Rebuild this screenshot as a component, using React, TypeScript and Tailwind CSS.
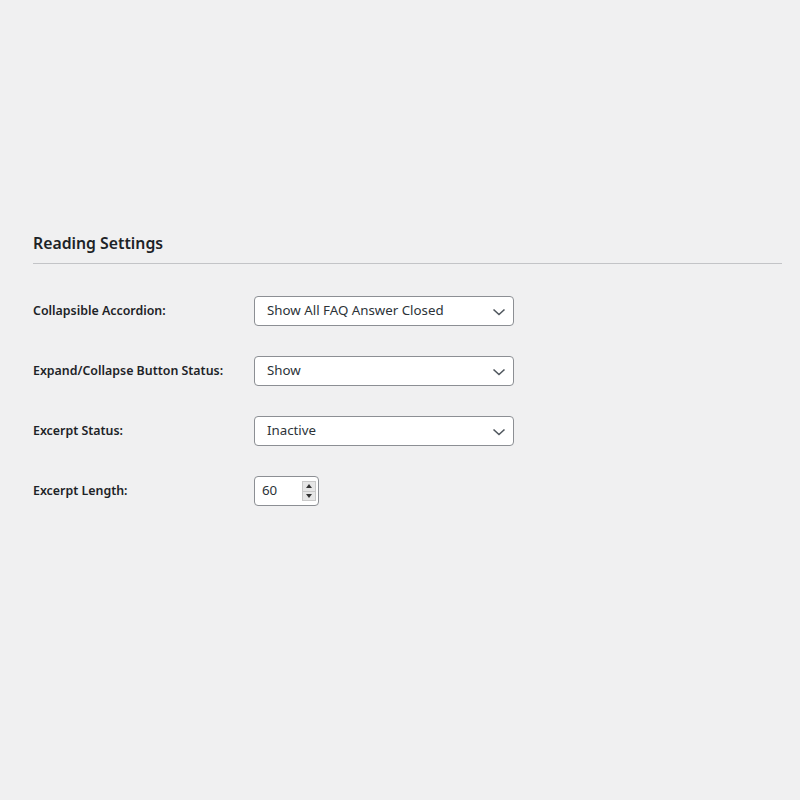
import React from "react";

const font = { fontFamily: '"Noto Sans", "Open Sans", sans-serif' };

function Chevron() {
  return (
    <svg width="14" height="8" viewBox="0 0 14 8" className="absolute right-[7px] top-[11px]">
      <path d="M1.5 1.5 L7 6.5 L12.5 1.5" fill="none" stroke="#50575e" strokeWidth="1.6" />
    </svg>
  );
}

function Select({ value }: { value: string }) {
  return (
    <div className="relative w-[260px] h-[30px] bg-white border border-[#8c8f94] rounded-[4px] flex items-center pl-[12px] text-[13.3px] text-[#2c3338]">
      <span>{value}</span>
      <Chevron />
    </div>
  );
}

function Row({ label, children }: { label: string; children: React.ReactNode }) {
  return (
    <div className="flex items-center h-[30px]">
      <div className="w-[221px] text-[12.4px] font-semibold text-[#1d2327]">{label}</div>
      {children}
    </div>
  );
}

export default function App() {
  return (
    <div className="min-h-screen bg-[#f0f0f1]" style={font}>
      <div className="pt-[232px] pl-[33px] pr-[18px]">
        <h2 className="text-[15.8px] font-semibold leading-[22px] text-[#1d2327]">Reading Settings</h2>
        <div className="mt-[9px] border-t border-[#c3c4c7]" />
        <div className="mt-[32px] flex flex-col gap-[30px]">
          <Row label="Collapsible Accordion:">
            <Select value="Show All FAQ Answer Closed" />
          </Row>
          <Row label="Expand/Collapse Button Status:">
            <Select value="Show" />
          </Row>
          <Row label="Excerpt Status:">
            <Select value="Inactive" />
          </Row>
          <Row label="Excerpt Length:">
            <div className="relative w-[65px] h-[30px] bg-white border border-[#8c8f94] rounded-[4px] flex items-center pl-[7px] text-[13.3px] text-[#2c3338]">
              <span>60</span>
              <div className="absolute right-[2px] top-[4px] w-[14px] h-[20px] flex flex-col bg-[#e6e6e6] border border-[#c9c9c9]">
                <div className="flex-1 flex items-center justify-center border-b border-[#c9c9c9]">
                  <div className="w-0 h-0 border-l-[3.5px] border-r-[3.5px] border-b-[4px] border-l-transparent border-r-transparent border-b-[#333]" />
                </div>
                <div className="flex-1 flex items-center justify-center">
                  <div className="w-0 h-0 border-l-[3.5px] border-r-[3.5px] border-t-[4px] border-l-transparent border-r-transparent border-t-[#333]" />
                </div>
              </div>
            </div>
          </Row>
        </div>
      </div>
    </div>
  );
}
